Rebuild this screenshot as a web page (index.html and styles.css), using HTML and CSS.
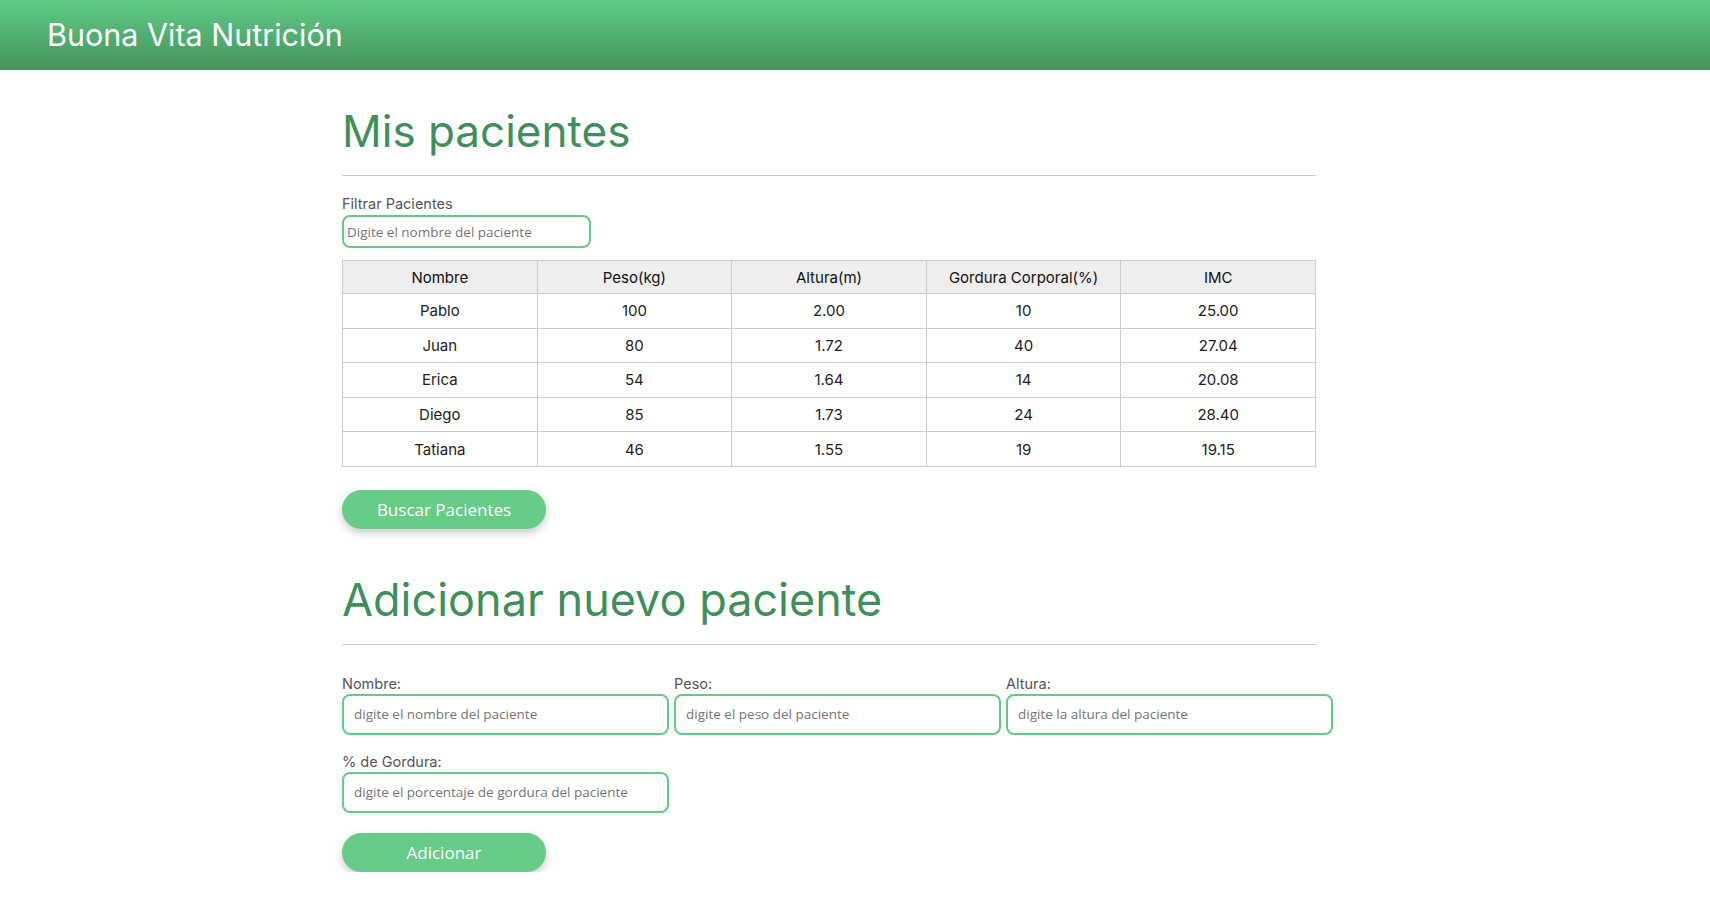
FILE: index.html
```html
<!DOCTYPE html>
<html lang="es">
<head>
  <meta charset="UTF-8">
  <meta name="viewport" content="width=device-width, initial-scale=1.0">
  <title>Buona Vita Nutrición</title>

  <link rel="stylesheet" href="styles.css">

</head>
<body>

  <header class="topbar">
    <h1 class="brand">Buona Vita Nutrición</h1>
  </header>

  <main class="container">

    <section>
      <h2 class="sectiontitle">Mis pacientes</h2>
      <hr class="divider">

      <label for="filtrar-tabla" class="fieldlabel">Filtrar Pacientes</label>
      <input type="text" id="filtrar-tabla" class="filterinput" placeholder="Digite el nombre del paciente">

      <table class="patients">
        <thead>
          <tr>
            <th>Nombre</th>
            <th>Peso(kg)</th>
            <th>Altura(m)</th>
            <th>Gordura Corporal(%)</th>
            <th>IMC</th>
          </tr>
        </thead>
        <tbody id="tabla-pacientes">
          <tr><td>Pablo</td><td>100</td><td>2.00</td><td>10</td><td>25.00</td></tr>
          <tr><td>Juan</td><td>80</td><td>1.72</td><td>40</td><td>27.04</td></tr>
          <tr><td>Erica</td><td>54</td><td>1.64</td><td>14</td><td>20.08</td></tr>
          <tr><td>Diego</td><td>85</td><td>1.73</td><td>24</td><td>28.40</td></tr>
          <tr><td>Tatiana</td><td>46</td><td>1.55</td><td>19</td><td>19.15</td></tr>
        </tbody>
      </table>

      <button id="buscar-pacientes" class="greenbutton">Buscar Pacientes</button>
    </section>

    <section>
      <h2 class="sectiontitle second">Adicionar nuevo paciente</h2>
      <hr class="divider">

      <form id="form-adiciona" class="addform">
        <div class="fieldrow">
          <div class="field">
            <label for="nombre" class="fieldlabel">Nombre:</label>
            <input id="nombre" type="text" class="forminput" placeholder="digite el nombre del paciente">
          </div>
          <div class="field">
            <label for="peso" class="fieldlabel">Peso:</label>
            <input id="peso" type="text" class="forminput" placeholder="digite el peso del paciente">
          </div>
          <div class="field">
            <label for="altura" class="fieldlabel">Altura:</label>
            <input id="altura" type="text" class="forminput" placeholder="digite la altura del paciente">
          </div>
        </div>

        <div class="fieldrow">
          <div class="field">
            <label for="gordura" class="fieldlabel">% de Gordura:</label>
            <input id="gordura" type="text" class="forminput" placeholder="digite el porcentaje de gordura del paciente">
          </div>
        </div>

        <button type="button" id="adicionar-paciente" class="greenbutton">Adicionar</button>
      </form>
    </section>

  </main>

</body>
</html>
```

FILE: styles.css
```css
body{
 margin: 0;
 background-color: #ffffff;
 font-family: Inter, "Noto Sans", sans-serif;
 color: #222;
}
.topbar {
 box-sizing: border-box;
 height: 70px;
 display: flex;
 align-items: center;
 padding: 0 47px 2px;
 background: linear-gradient(to bottom, #5fcb86, #45935e);
}
.brand {
 margin: 0;
 font-size: 30.5px;
 font-weight: 400;
 color: #ffffff;
}
.container {
 width: 974px;
 margin-left: 342px;
}
.sectiontitle {
 margin: 31px 0 0;
 font-size: 44px;
 line-height: 60px;
 font-weight: 400;
 color: #3f8f5a;
}
.sectiontitle.second {
 margin-top: 41px;
 font-size: 45px;
}
.divider {
 margin: 14px 0 0;
 border: none;
 border-top: 1px solid #cccccc;
 height: 0;
}
.fieldlabel {
 display: block;
 margin-top: 18px;
 font-size: 14.5px;
 line-height: 20px;
 color: #555;
}
.filterinput {
 display: block;
 box-sizing: border-box;
 width: 249px;
 height: 33px;
 margin-top: 1px;
 padding: 0 3px;
 border: 2px solid #63cb85;
 border-radius: 8px;
 font-family: "Open Sans", sans-serif;
 font-size: 13.5px;
}
.patients {
 width: 100%;
 margin-top: 12px;
 border-collapse: collapse;
 table-layout: fixed;
 font-size: 15px;
 text-align: center;
}
.patients th,
.patients td {
 border: 1px solid #cccccc;
 padding: 0;
}
.patients th {
 height: 32px;
 background-color: #eeeeee;
 font-weight: 400;
 color: #111;
}
.patients td {
 height: 33.6px;
}
.greenbutton {
 display: block;
 width: 204px;
 height: 39px;
 margin-top: 23px;
 border: none;
 border-radius: 20px;
 background-color: #66cc88;
 color: #ffffff;
 font-family: "Open Sans", sans-serif;
 font-size: 17px;
 box-shadow: 0 4px 8px rgba(0, 0, 0, 0.2);
 cursor: pointer;
}
.addform {
 margin: 0;
}
.fieldrow {
 display: flex;
 gap: 5px;
}
.fieldrow + .fieldrow .fieldlabel {
 margin-top: 17px;
}
.field .fieldlabel {
 margin-bottom: 0;
}
.fieldrow:first-child .fieldlabel {
 margin-top: 29px;
}
.forminput {
 box-sizing: border-box;
 width: 327px;
 height: 41px;
 padding: 0 10px;
 border: 2px solid #63cb85;
 border-radius: 8px;
 font-family: "Open Sans", sans-serif;
 font-size: 13.5px;
}
.addform .greenbutton {
 margin-top: 20px;
}
```
